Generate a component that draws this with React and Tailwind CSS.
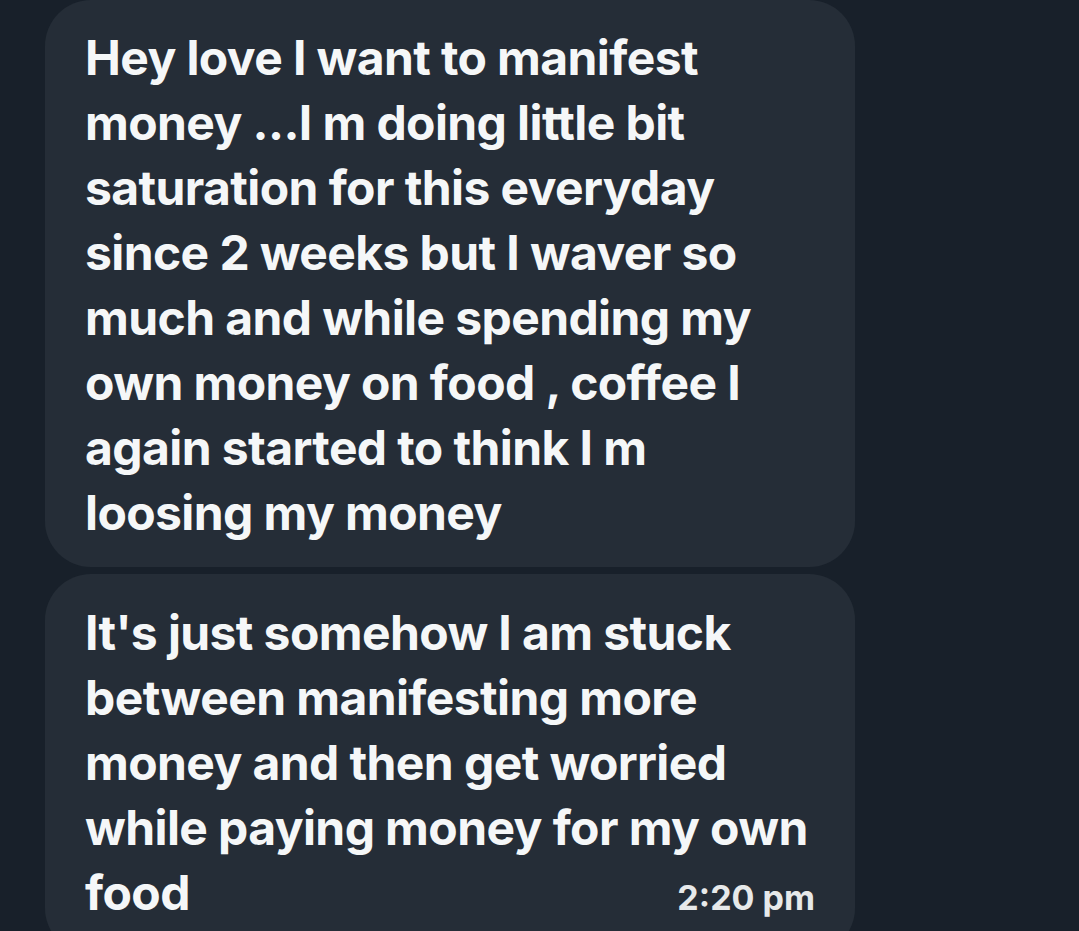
const first = [
  "Hey love I want to manifest",
  "money ...I m doing little bit",
  "saturation for this everyday",
  "since 2 weeks but I waver so",
  "much and while spending my",
  "own money on food , coffee I",
  "again started to think I m",
  "loosing my money",
];

const second = [
  "It's just somehow I am stuck",
  "between manifesting more",
  "money and then get worried",
  "while paying money for my own",
];

const Line = ({ text }) => <div className="whitespace-nowrap">{text}</div>;

export default function App() {
  return (
    <div
      className="w-[1079px] h-[931px] overflow-hidden bg-[#18202a] text-[#f5f7f8]"
      style={{ fontFamily: "Inter, 'Open Sans', 'Liberation Sans', sans-serif" }}
    >
      <div className="flex flex-col gap-[7px] pl-[45px]">
        <div className="w-[810px] rounded-[46px] bg-[#252d37] pl-[40px] pt-[25px] pb-[22px] text-[48px] leading-[65px] font-bold tracking-[-0.6px]">
          {first.map((t, i) => (
            <Line key={i} text={t} />
          ))}
        </div>
        <div className="w-[810px] h-[380px] rounded-[46px] bg-[#252d37] pl-[40px] pr-[40px] pt-[26px] text-[48px] leading-[65px] font-bold tracking-[-0.6px]">
          {second.map((t, i) => (
            <Line key={i} text={t} />
          ))}
          <div className="flex items-baseline justify-between">
            <span>food</span>
            <span className="text-[34px] font-bold text-[#e7e9ea] tracking-normal">2:20 pm</span>
          </div>
        </div>
      </div>
    </div>
  );
}
